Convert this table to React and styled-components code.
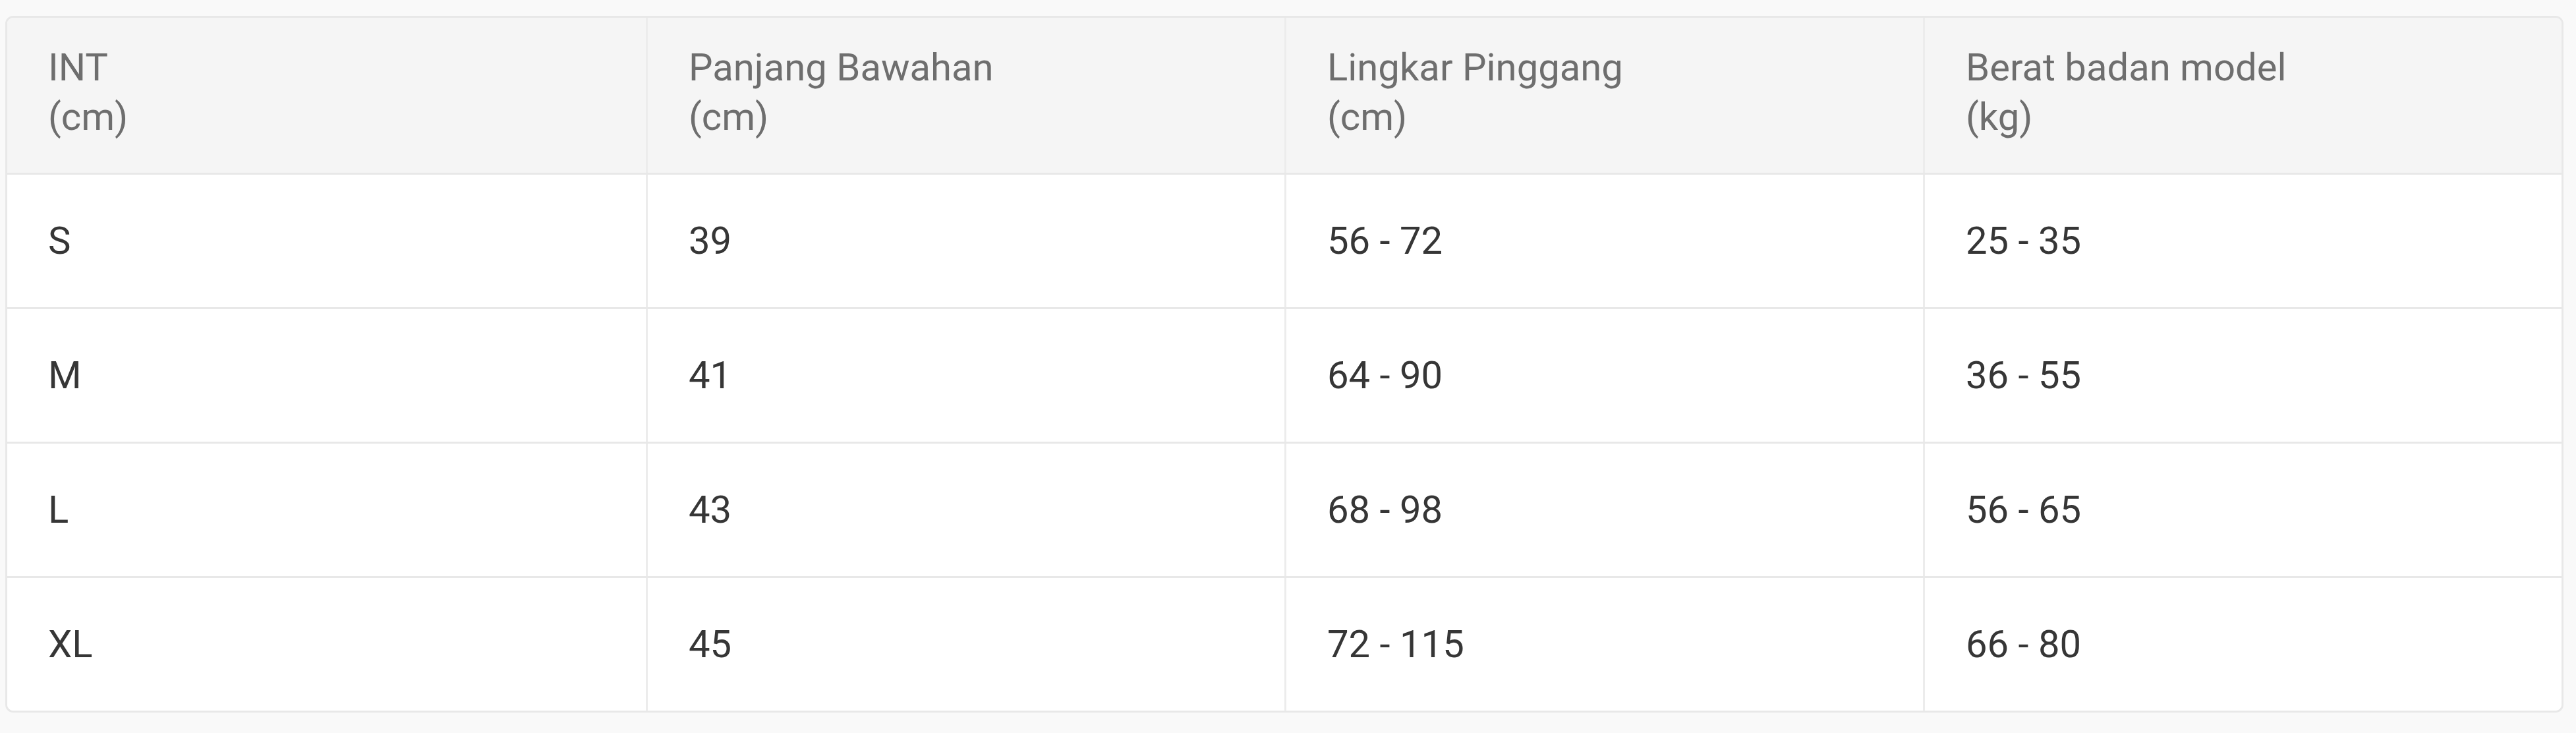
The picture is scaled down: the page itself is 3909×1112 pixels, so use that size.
import React from 'react';
import styled, { createGlobalStyle } from 'styled-components';

const GlobalStyle = createGlobalStyle`
    body {
        margin: 0;
        background: #f9f9f9;
        font-family: Roboto, 'Noto Sans', sans-serif;
    }
`;

const Page = styled.div`
    padding: 24px 0 0 8px;
`;

const Card = styled.div`
    width: 3882px;
    box-sizing: border-box;
    border: 3px solid #e8e8e8;
    border-radius: 12px;
    overflow: hidden;
    background: #ffffff;
`;

const Row = styled.div`
    display: grid;
    grid-template-columns: repeat(4, 1fr);
    height: ${(p) => (p.head ? 235 : 201)}px;
    background: ${(p) => (p.head ? '#f5f5f5' : '#ffffff')};
    border-bottom: 3px solid #e8e8e8;

    &:last-child {
        border-bottom: none;
    }
`;

const Cell = styled.div`
    display: flex;
    flex-direction: column;
    justify-content: ${(p) => (p.head ? 'flex-start' : 'center')};
    padding: ${(p) => (p.head ? '38px 62px 0' : '0 62px')};
    border-left: 3px solid #ececec;
    font-size: 58px;
    line-height: 75px;
    color: ${(p) => (p.head ? '#6e6e6e' : '#363636')};

    &:first-child {
        border-left: none;
    }
`;

const headers = [
    ['INT', '(cm)'],
    ['Panjang Bawahan', '(cm)'],
    ['Lingkar Pinggang', '(cm)'],
    ['Berat badan model', '(kg)'],
];

const sizes = [
    ['S', '39', '56 - 72', '25 - 35'],
    ['M', '41', '64 - 90', '36 - 55'],
    ['L', '43', '68 - 98', '56 - 65'],
    ['XL', '45', '72 - 115', '66 - 80'],
];

function App() {
    return (
        <>
            <GlobalStyle />
            <Page>
                <Card>
                    <Row head>
                        {headers.map(([title, unit]) => (
                            <Cell head key={title}>
                                <span>{title}</span>
                                <span>{unit}</span>
                            </Cell>
                        ))}
                    </Row>
                    {sizes.map((row) => (
                        <Row key={row[0]}>
                            {row.map((value, i) => (
                                <Cell key={i}>{value}</Cell>
                            ))}
                        </Row>
                    ))}
                </Card>
            </Page>
        </>
    );
}

export default App;
